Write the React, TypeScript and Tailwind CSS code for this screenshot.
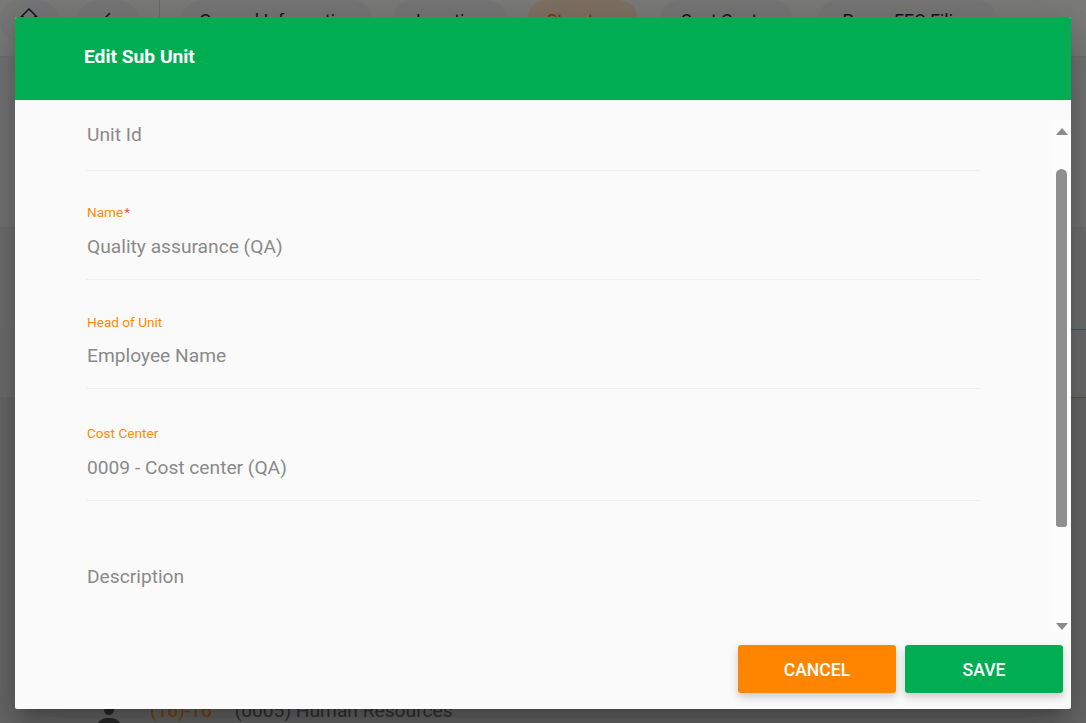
const tabs = [
  { label: "General Information", box: "w-[190px]", active: false },
  { label: "Location", box: "ml-[21px] w-[114px]", active: false },
  { label: "Structure", box: "ml-[20px] w-[111px]", active: true },
  { label: "Cost Center", box: "ml-[22px] w-[133px]", active: false },
  { label: "Payee FEO Filing", box: "ml-[25px] w-[179px]", active: false },
];

const fields = [
  { label: "", value: "Unit Id", box: "h-[71px] pt-[23px]", gap: "" },
  { label: "Name", required: true, value: "Quality assurance (QA)", box: "h-[109px] pt-[32px]", gap: "mt-[14px]" },
  { label: "Head of Unit", value: "Employee Name", box: "h-[109px] pt-[33px]", gap: "mt-[13px]" },
  { label: "Cost Center", value: "0009 - Cost center (QA)", box: "h-[112px] pt-[35px]", gap: "mt-[14px]" },
];

function Field({ label, required, value, box, gap }: { label: string; required?: boolean; value: string; box: string; gap: string }) {
  return (
    <div className={`${box} border-b border-[#efefef] pl-[1px]`}>
      {label ? (
        <p className="h-[18px] text-[13.6px] leading-[18px] text-[#ff8a00]">
          {label}
          {required ? <span className="ml-[1px] text-[#ff5252]">*</span> : null}
        </p>
      ) : null}
      <p className={`${gap} text-[19.2px] leading-[24px] text-[#8a8a8a]`}>{value}</p>
    </div>
  );
}

export default function App() {
  return (
    <div className="relative h-[723px] w-[1086px] overflow-hidden bg-[#f6f6f4] font-['Roboto',sans-serif]">
      {/* page behind the dialog */}
      <div className="flex h-[57px] items-start border-b border-[#e2e2e2]">
        <div className="flex h-full w-[160px] shrink-0 items-start border-r border-[#d8d8d8]">
          <div className="flex h-[42px] w-[58px] justify-center rounded-[20px] bg-[#eeeeee] pt-[8px]">
            <svg width="20" height="20" viewBox="0 0 20 20" fill="none" stroke="#1f2a44" strokeWidth="1.5">
              <path d="M1 10 L10 1 L19 10 M4 8 V18 H16 V8" />
            </svg>
          </div>
          <div className="ml-[20px] flex h-[42px] w-[60px] justify-center rounded-[20px] bg-[#eeeeee] pt-[12px]">
            <svg width="20" height="20" viewBox="0 0 20 20" fill="none" stroke="#1f2a44" strokeWidth="1.5">
              <path d="M12 1 L2 11 L1 18 L8 17 L17 8" />
            </svg>
          </div>
        </div>
        <div className="flex flex-1 items-start pl-[22px]">
          {tabs.map((tab) => (
            <div
              key={tab.label}
              className={`flex h-[42px] ${tab.box} shrink-0 items-center justify-center rounded-[20px] text-[17.6px] ${
                tab.active ? "bg-[#ffe2c8] text-[#ff6a00]" : "bg-[#eeeeee] text-[#1f2a44]"
              }`}
            >
              {tab.label}
            </div>
          ))}
        </div>
      </div>
      <div className="h-[171px] border-b border-[#dcdcdc] bg-[#e8e8e8]" />
      <div className="h-[101px] bg-[#dedede]" />
      <div className="h-[68px] bg-[#dadada] pl-[60px]">
        <div className="h-full border-t border-[#ff9a1f]" />
      </div>
      <div className="h-[326px] bg-[#d0d0d0] pl-[60px]">
        <div className="h-full border-t border-[#ff9a1f]">
          <div className="mt-[298px] flex h-[30px] items-center pl-[37px] text-[19.2px] leading-[24px] text-[#666666]">
            <svg className="mt-[10px] shrink-0" width="24" height="24" viewBox="0 0 24 24" fill="#555555">
              <circle cx="12" cy="6" r="5" />
              <path d="M0 24 C0 16 6 14 12 14 C18 14 24 16 24 24 Z" />
            </svg>
            <span className="ml-[29px] text-[#ff8a00]">(16)-16</span>
            <span className="ml-[23px]">(0005) Human Resources</span>
          </div>
        </div>
      </div>

      {/* dim layer */}
      <div className="absolute inset-0 bg-black/50" />

      {/* dialog */}
      <div className="absolute left-[15px] top-[17px] flex h-[692px] w-[1056px] flex-col overflow-hidden rounded-[2px] bg-[#fafafa] shadow-[0_11px_15px_-7px_rgba(0,0,0,0.2),0_24px_38px_3px_rgba(0,0,0,0.14),0_9px_46px_8px_rgba(0,0,0,0.12)]">
        <div className="flex h-[83px] shrink-0 items-center bg-[#00ad53] pb-[2px] pl-[69px] text-[19.2px] font-bold text-white">Edit Sub Unit</div>
        <div className="flex min-h-0 flex-1">
          <div className="min-w-0 flex-1 pl-[71px] pr-[71px]">
            <Field {...fields[0]} />
            <Field {...fields[1]} />
            <Field {...fields[2]} />
            <Field {...fields[3]} />
            <p className="mt-[64px] pl-[1px] text-[19.2px] leading-[24px] text-[#8a8a8a]">Description</p>
          </div>
          <div className="mt-[20px] flex h-[512px] w-[19px] shrink-0 flex-col items-center bg-[#fcfcfc]">
            <div className="mt-[8px] h-0 w-0 border-x-[6.5px] border-b-[7px] border-x-transparent border-b-[#8a8a8a]" />
            <div className="mt-[34px] h-[358px] w-[11px] rounded-t-[6px] rounded-b-[3px] bg-[#8f8f8f]" />
            <div className="mt-[96px] h-0 w-0 border-x-[6.5px] border-t-[7px] border-x-transparent border-t-[#8a8a8a]" />
          </div>
        </div>
        <div className="absolute bottom-[16px] right-[8px] flex gap-[9px]">
          <button type="button" className="h-[48px] w-[158px] rounded-[3px] bg-[#ff8500] pt-[2px] text-[17.6px] font-medium text-white shadow-[0_4px_8px_rgba(0,0,0,0.2)]">
            CANCEL
          </button>
          <button type="button" className="h-[48px] w-[158px] rounded-[3px] bg-[#00ad53] pt-[2px] text-[17.6px] font-medium text-white shadow-[0_4px_8px_rgba(0,0,0,0.2)]">
            SAVE
          </button>
        </div>
      </div>
    </div>
  );
}
